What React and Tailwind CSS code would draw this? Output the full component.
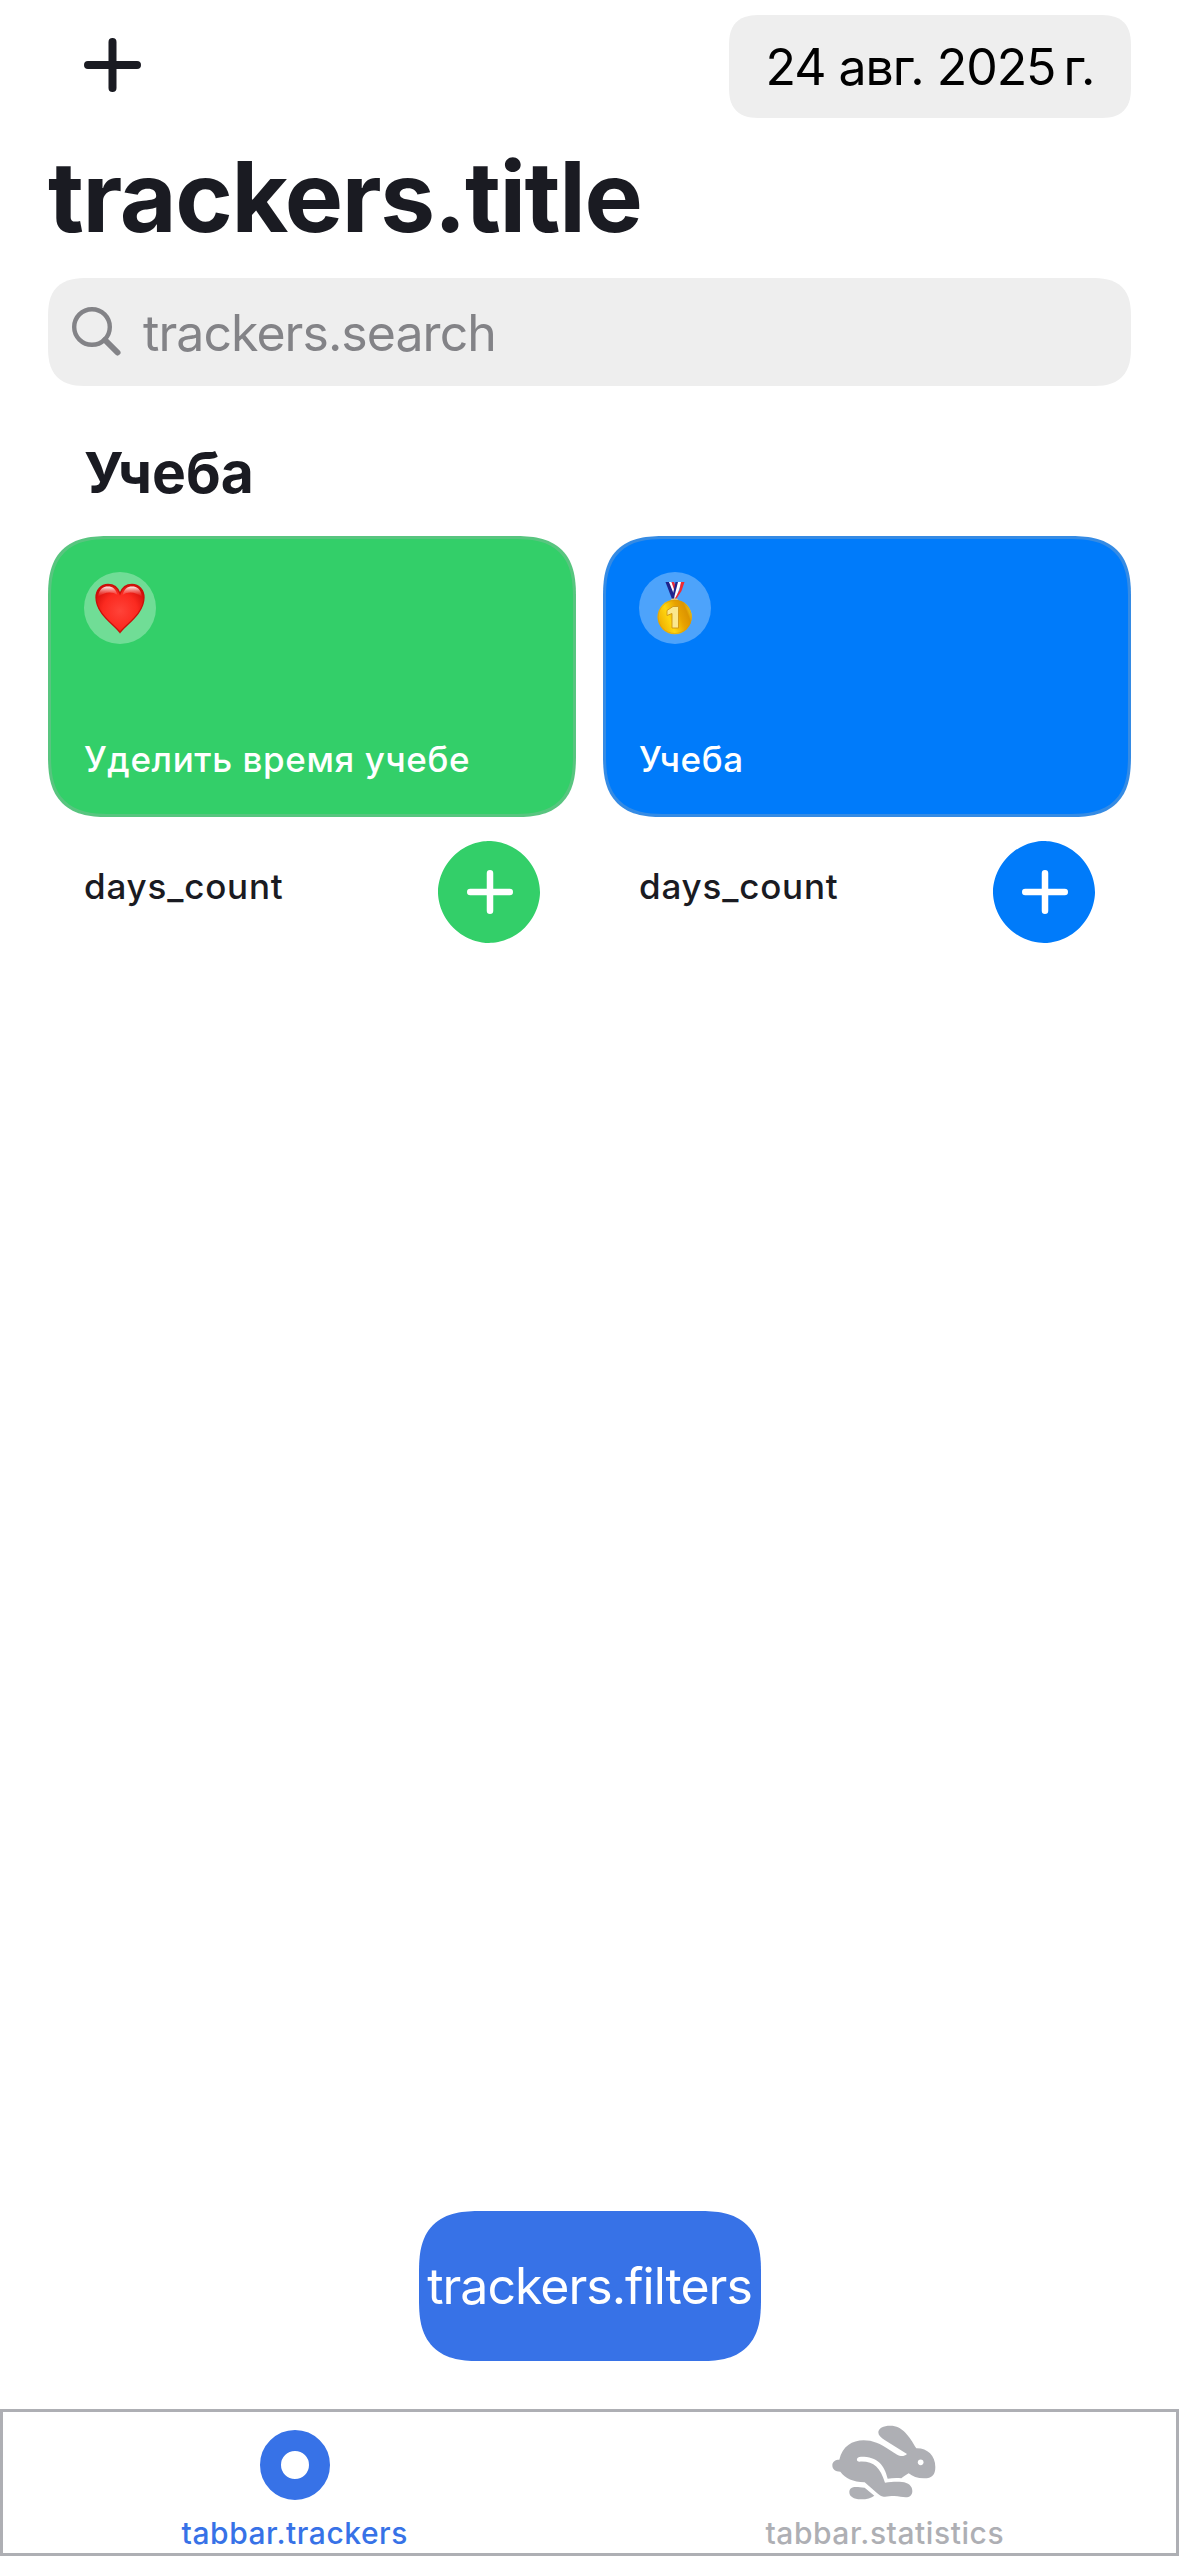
function Plus({ width, height, stroke }) {
  const x = width / 2;
  const y = height / 2;
  const e = stroke / 2;
  return (
    <svg width={width} height={height} viewBox={`0 0 ${width} ${height}`} fill="none" stroke="currentColor" strokeWidth={stroke} strokeLinecap="round">
      <path d={`M${x} ${e}V${height - e}M${e} ${y}H${width - e}`} />
    </svg>
  );
}

function Heart() {
  return (
    <svg width="50" height="51" viewBox="0 0 50 51">
      <defs>
        <radialGradient id="heartFill" cx="0.5" cy="0.55" r="0.6">
          <stop offset="0" stopColor="#ff4339" />
          <stop offset="0.6" stopColor="#fb2a20" />
          <stop offset="1" stopColor="#d40d08" />
        </radialGradient>
        <linearGradient id="heartShine" x1="0" y1="0" x2="0" y2="1">
          <stop offset="0" stopColor="#fff" stopOpacity="0.95" />
          <stop offset="1" stopColor="#ff6a60" stopOpacity="0" />
        </linearGradient>
      </defs>
      <path d="M25 49.5C20 42 1 31 1 14.500C1 7 6 1.500 13 1.500C18.500 1.500 23 5 25 10.500C27 5 31.500 1.500 37 1.500C44 1.500 49 7 49 14.500C49 31 30 42 25 49.500Z" fill="url(#heartFill)" stroke="#c9100a" strokeWidth="1.300" />
      <path d="M3 14C4 6 8 3.500 13 3.500C17.500 3.500 21 6 22.500 12C17 8 9 9 3 14Z" fill="url(#heartShine)" />
      <path d="M47 14C46 6 42 3.500 37 3.500C32.500 3.500 29 6 27.500 12C33 8 41 9 47 14Z" fill="url(#heartShine)" />
    </svg>
  );
}

function Medal() {
  return (
    <svg width="36" height="53" viewBox="0 0 36 53">
      <defs>
        <linearGradient id="gold" x1="0" y1="0.7" x2="1" y2="0.3">
          <stop offset="0" stopColor="#eda800" />
          <stop offset="0.35" stopColor="#ffd60f" />
          <stop offset="0.65" stopColor="#e8a200" />
          <stop offset="0.85" stopColor="#dc9400" />
          <stop offset="1" stopColor="#f7dc1c" />
        </linearGradient>
      </defs>
      <path d="M8.500 0H12.500L20 14.500L17 18.500L15 17Z" fill="#20248c" />
      <path d="M12 0H14.500L19.500 12L18 15Z" fill="#fff" />
      <path d="M14.500 0H17L20 8L18.500 12Z" fill="#e8283a" />
      <path d="M18.500 0H21.500L18.500 14L16.500 16L15.500 14Z" fill="#20248c" />
      <path d="M21 0H24.500L19.500 14.500L17 18L17.500 14Z" fill="#fff" />
      <path d="M24 0H27.500L24.500 9L18.500 18L17.500 17.500L22.500 8Z" fill="#f02a33" />
      <rect x="14" y="16.500" width="7" height="3.500" rx="1.500" fill="#e2cc87" />
      <circle cx="17.700" cy="35" r="17.200" fill="url(#gold)" />
      <circle cx="17.700" cy="35" r="16.500" fill="none" stroke="#d89a08" strokeOpacity="0.6" strokeWidth="1" />
      <path d="M16 24.500H21.500V46H15V31.500L10 33.500V28.500Z" fill="#fbe88d" stroke="#cf9414" strokeWidth="0.900" strokeLinejoin="round" />
    </svg>
  );
}

function Rabbit() {
  return (
    <svg width="105" height="75" viewBox="65 44 315 225" fill="currentColor">
      <path d="M204 66C204 54 219 46 240 46C276 46 297 78 318 114C350 113 375 135 375 170C375 193 366 204 341 204C321 204 306 198 295 189C287 194 279 199 273 204C259 202 246 203 232 205C222 163 202 139 152 139C137 139 136 154 148 154C190 152 209 171 224 217C244 214 262 214 275 215C294 217 306 227 306 242C306 254 298 261 286 261C276 261 266 257 252 257C237 257 230 260 220 259C212 258 207 254 199 247L163 216C127 214 106 205 90 184C75 184 66 177 66 165C66 154 75 148 87 148C96 108 126 90 160 90C187 90 210 100 238 119C264 137 276 143 290 131L224 90C211 82 204 75 204 66Z" />
      <circle cx="331" cy="156" r="8.500" fill="#fff" />
      <path d="M163 232L192 256C183 263 170 267 151 267C130 267 117 259 117 246C117 235 124 230 137 230C146 230 151 231 163 232Z" />
    </svg>
  );
}

function TrackerCard({ emoji, title, fill }) {
  return (
    <article className="w-[528px]">
      <div className={`flex h-[281px] flex-col justify-between rounded-[48px] border-[3px] border-[#AEAFB4]/30 px-[33px] pt-[33px] pb-[34px] supports-[corner-shape:round]:rounded-[62px] supports-[corner-shape:round]:[corner-shape:superellipse(1.43)] ${fill}`}>
        <div className="flex size-[72px] items-center justify-center rounded-full bg-white/30">{emoji}</div>
        <h3 className="text-[35px] leading-[42px] font-medium tracking-[0.6px] whitespace-nowrap text-white">{title}</h3>
      </div>
      <div className="flex justify-between pt-6 pr-9 pl-9">
        <span className="pt-[24px] text-[35px] leading-[42px] font-medium tracking-[0.8px]">days_count</span>
        <button className={`flex size-[102px] items-center justify-center rounded-full pl-[2px] text-white supports-[corner-shape:round]:[corner-shape:superellipse(0.96)] ${fill}`}>
          <Plus width={46} height={44} stroke={6.5} />
        </button>
      </div>
    </article>
  );
}

export default function App() {
  return (
    <div className="flex h-[2556px] w-[1179px] flex-col overflow-hidden bg-white font-['Inter',sans-serif] text-[#1A1B22]">
      <header className="flex h-[118px] items-start justify-between pt-[15px] pr-12 pl-[84px]">
        <button className="pt-[23px]">
          <Plus width={57} height={54} stroke={8} />
        </button>
        <div className="flex h-[103px] w-[402px] items-center justify-center rounded-[24px] bg-[#EEEEEE] pt-[2px] text-[50px] tracking-[-1.05px] whitespace-nowrap text-black supports-[corner-shape:round]:rounded-[32px] supports-[corner-shape:round]:[corner-shape:superellipse(1.43)]">
          24 авг. 2025<span className="pl-[8px]">г.</span>
        </div>
      </header>

      <h1 className="mt-[19px] ml-12 h-[120px] text-[98px] leading-[120px] font-bold tracking-[-1.4px]">trackers.title</h1>

      <div className="mx-12 mt-[21px] flex h-[108px] items-center rounded-[30px] bg-[#EEEEEE] pl-6 text-[#838387] supports-[corner-shape:round]:rounded-[40px] supports-[corner-shape:round]:[corner-shape:superellipse(1.43)]">
        <svg width="50" height="50" viewBox="0 0 50 50" fill="none" stroke="currentColor" strokeLinecap="round">
          <circle cx="20" cy="20" r="17.800" strokeWidth="4.400" />
          <path d="M33 33L45.500 45.500" strokeWidth="6" />
        </svg>
        <span className="pt-[3px] pl-[21px] text-[50px] tracking-[-0.95px]">trackers.search</span>
      </div>

      <main className="flex-1 px-12 pt-[56px]">
        <h2 className="pl-9 text-[57px] leading-[62px] font-bold">Учеба</h2>
        <div className="flex gap-[27px] pt-8">
          <TrackerCard emoji={<Heart />} title="Уделить время учебе" fill="bg-[#33CF69]" />
          <TrackerCard emoji={<Medal />} title="Учеба" fill="bg-[#007BFA]" />
        </div>
      </main>

      <button className="mb-12 flex h-[150px] w-[342px] items-center justify-center self-center rounded-[48px] bg-[#3772E7] pt-px text-[50px] tracking-[-1px] whitespace-nowrap text-white supports-[corner-shape:round]:rounded-[62px] supports-[corner-shape:round]:[corner-shape:superellipse(1.43)]">
        trackers.filters
      </button>

      <nav className="grid h-[147px] grid-cols-2 border-[3px] border-[#AEAFB4] text-[30px] leading-[36px] font-medium tracking-[0.55px]">
        <div className="flex flex-col items-center pt-[18px] pr-[3px] text-[#3772E7]">
          <div className="size-[70px] rounded-full border-[21px] border-current" />
          <span className="mt-[15px]">tabbar.trackers</span>
        </div>
        <div className="flex flex-col items-center pt-[13px] pl-[4px] text-[#AEAFB4]">
          <Rabbit />
          <span className="mt-[15px]">tabbar.statistics</span>
        </div>
      </nav>
    </div>
  );
}
